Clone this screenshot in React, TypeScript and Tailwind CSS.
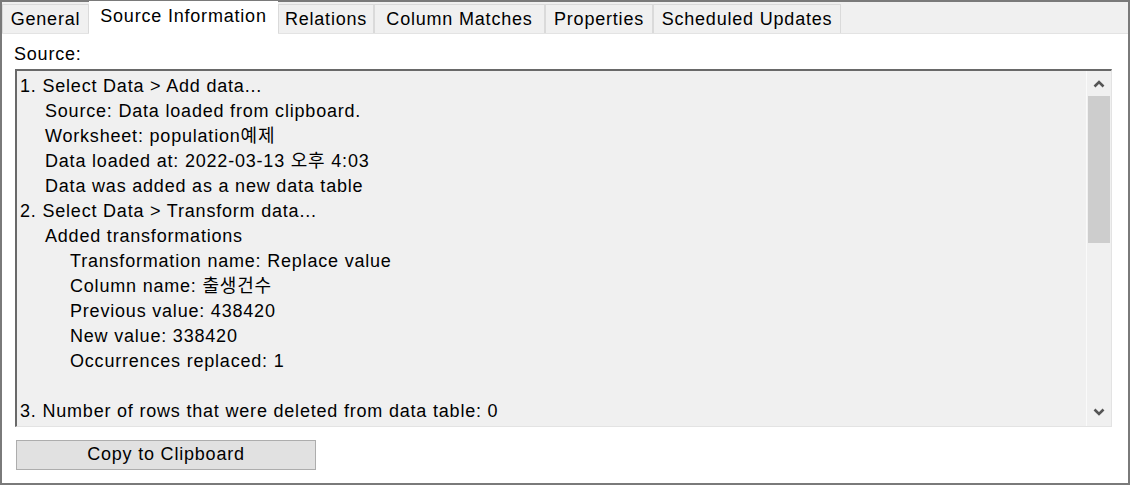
import React from "react";

const tabs = [
  { label: "General", width: "w-[87px]" },
  { label: "Source Information", width: "w-[189px]" },
  { label: "Relations", width: "w-[96px]" },
  { label: "Column Matches", width: "w-[171px]" },
  { label: "Properties", width: "w-[108px]" },
  { label: "Scheduled Updates", width: "w-[188px]" },
];

const lines: { text: string; level: number }[] = [
  { text: "1. Select Data > Add data...", level: 0 },
  { text: "Source: Data loaded from clipboard.", level: 1 },
  { text: "Worksheet: population예제", level: 1 },
  { text: "Data loaded at: 2022-03-13 오후 4:03", level: 1 },
  { text: "Data was added as a new data table", level: 1 },
  { text: "2. Select Data > Transform data...", level: 0 },
  { text: "Added transformations", level: 1 },
  { text: "Transformation name: Replace value", level: 2 },
  { text: "Column name: 출생건수", level: 2 },
  { text: "Previous value: 438420", level: 2 },
  { text: "New value: 338420", level: 2 },
  { text: "Occurrences replaced: 1", level: 2 },
  { text: "", level: 0 },
  { text: "3. Number of rows that were deleted from data table: 0", level: 0 },
];

const indent = ["pl-0", "pl-[25px]", "pl-[50px]"];

export default function App() {
  return (
    <div
      className="flex h-[485px] w-[1130px] flex-col border-2 border-[#7a7a7a] bg-white text-[18px] tracking-[0.8px] text-black"
      style={{ fontFamily: '"Liberation Sans", "Noto Sans CJK KR", sans-serif' }}
    >
      {/* tab strip */}
      <div className="flex h-[32px] shrink-0 items-end border-b border-[#e3e3e3] bg-[#f0f0f0]">
        {tabs.map((tab, i) =>
          i === 1 ? (
            <div
              key={tab.label}
              className={`${tab.width} relative z-10 -mb-[2px] flex h-[34px] items-start justify-center bg-white pt-[2px]`}
            >
              {tab.label}
            </div>
          ) : (
            <div
              key={tab.label}
              className={`${tab.width} flex h-[29px] items-center justify-center border border-b-0 border-[#dadada] bg-[#f0f0f0] pt-[1px]`}
            >
              {tab.label}
            </div>
          )
        )}
      </div>

      {/* page */}
      <div className="flex flex-1 flex-col px-[13px] pt-[8px]">
        <div className="-ml-[1px] leading-[24px]">Source:</div>
        <div className="mt-[3px] flex h-[358px] w-[1097px] border-l-2 border-t-2 border-[#696969] border-b border-r border-b-[#e3e3e3] border-r-[#e3e3e3] bg-[#f0f0f0]">
          <div className="flex-1 pl-[3px] pt-[3px] leading-[25px]">
            {lines.map((line, i) => (
              <div key={i} className={`${indent[line.level]} h-[25px] whitespace-pre`}>
                {line.text}
              </div>
            ))}
          </div>
          <div className="flex w-[25px] flex-col border-l border-[#fafafa] bg-[#f0f0f0]">
            <div className="flex h-[25px] items-center justify-center">
              <svg width="12" height="8" viewBox="0 0 12 8">
                <path d="M1.5 6.5 L6 2 L10.5 6.5" fill="none" stroke="#555" strokeWidth="2.6" />
              </svg>
            </div>
            <div className="mx-[1px] h-[147px] bg-[#cdcdcd]" />
            <div className="flex-1" />
            <div className="flex h-[28px] items-center justify-center">
              <svg width="12" height="8" viewBox="0 0 12 8">
                <path d="M1.5 1.5 L6 6 L10.5 1.5" fill="none" stroke="#555" strokeWidth="2.6" />
              </svg>
            </div>
          </div>
        </div>
        <div className="ml-[1px] mt-[13px] flex h-[30px] w-[300px] items-center justify-center border border-[#adadad] bg-[#e1e1e1] pb-[1px]">
          Copy to Clipboard
        </div>
      </div>
    </div>
  );
}
